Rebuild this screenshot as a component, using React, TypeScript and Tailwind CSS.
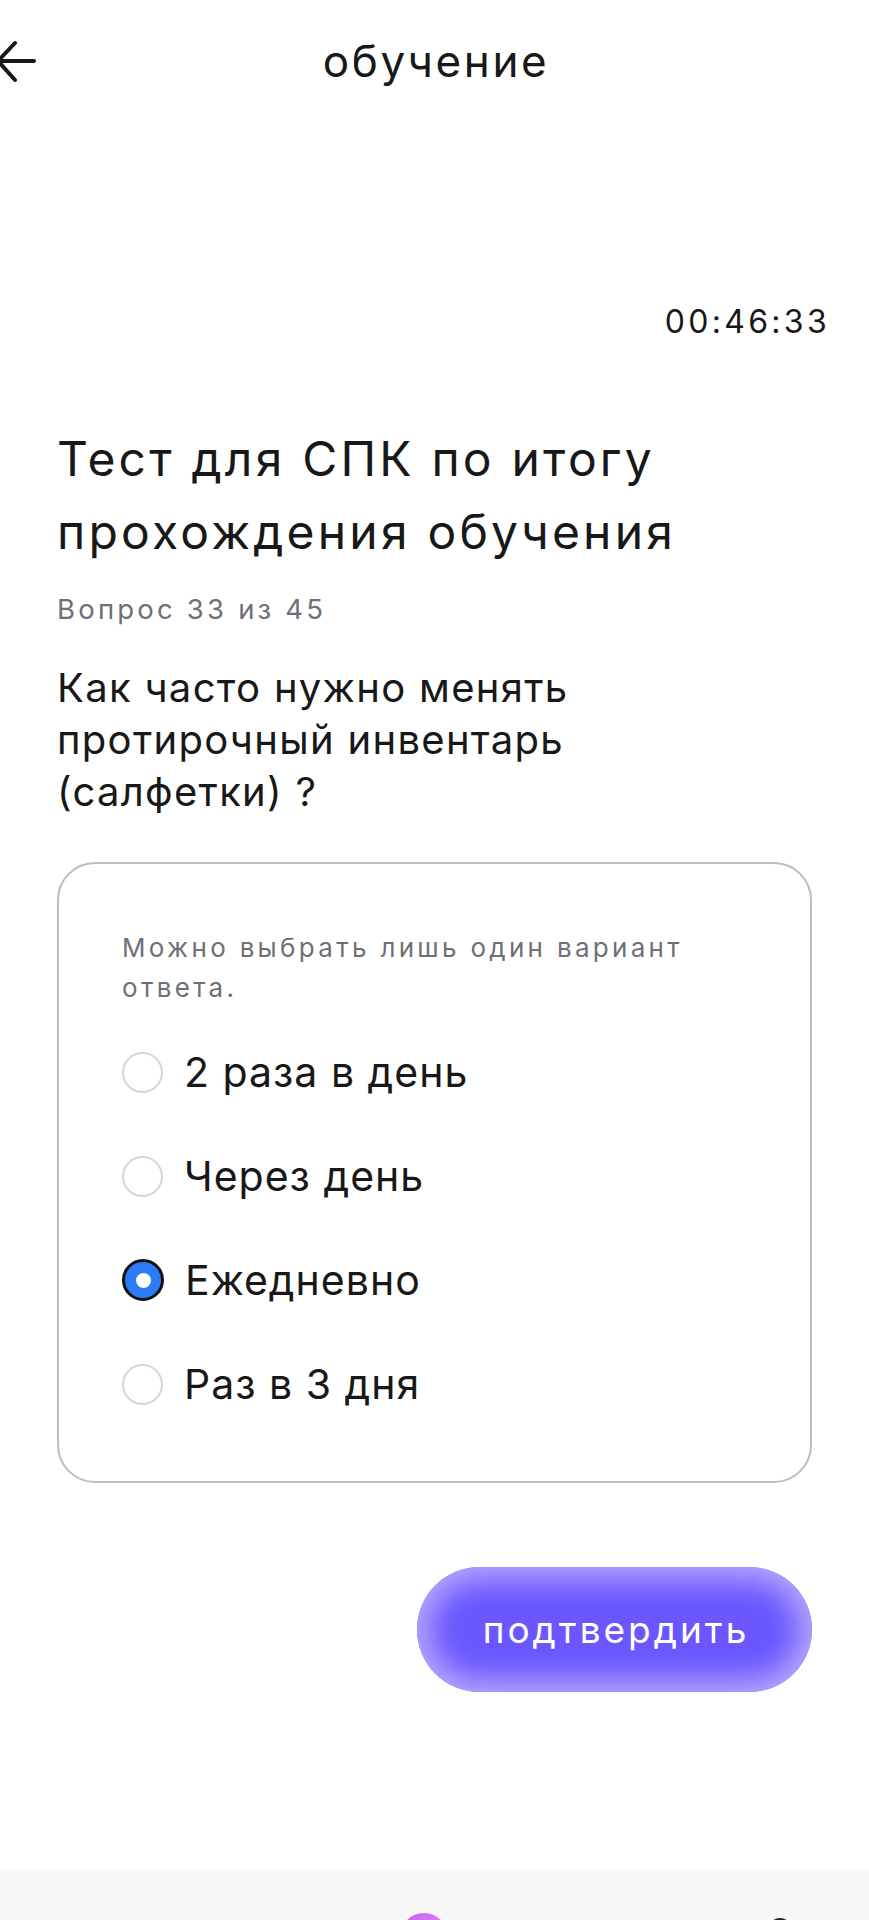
import { useState } from 'react';

const options = ['2 раза в день', 'Через день', 'Ежедневно', 'Раз в 3 дня'];

function Radio({ checked }: { checked: boolean }) {
  if (checked) {
    return (
      <span className="flex h-[42px] w-[42px] shrink-0 items-center justify-center rounded-full border-[3px] border-[#111] bg-[#2b7bf6]">
        <span className="h-[15px] w-[15px] rounded-full bg-white" />
      </span>
    );
  }
  return <span className="h-[41px] w-[41px] shrink-0 rounded-full border-2 border-[#d6d6d6] bg-white" />;
}

export default function App() {
  const [selected, setSelected] = useState(2);

  return (
    <div className="min-h-[1920px] bg-white font-['Inter','Noto_Sans',sans-serif] text-[#181818]">
      <header className="relative flex h-[122px] items-center justify-center">
        <svg className="absolute left-0 top-[39px]" width="40" height="44" viewBox="0 0 40 44" fill="none">
          <path d="M-2 22H34M15 4L-2 22L15 41" stroke="#181818" strokeWidth="4" strokeLinecap="round" strokeLinejoin="round" />
        </svg>
        <h1 className="pl-[3px] text-[44px] leading-[50px] tracking-[2.6px]">обучение</h1>
      </header>

      <div className="mt-[180px] pr-[39px] text-right text-[32px] leading-[40px] tracking-[3.3px]">00:46:33</div>

      <main className="px-[57px]">
        <h2 className="mt-[80px] text-[48px] leading-[73px] tracking-[3.2px]">
          Тест для СПК по итогу
          <br />
          прохождения обучения
        </h2>
        <p className="mt-[23px] text-[27.5px] leading-[36px] tracking-[3.2px] text-[#6d7077]">Вопрос 33 из 45</p>
        <p className="mt-[35px] text-[40px] leading-[52px] tracking-[1.3px]">
          Как часто нужно менять
          <br />
          протирочный инвентарь
          <br />
          (салфетки) ?
        </p>

        <section className="mt-[44px] h-[621px] rounded-[38px] border-2 border-[#babdc3] px-[63px] pt-[64px]">
          <p className="text-[26px] leading-[40px] tracking-[3.3px] text-[#6d7077]">
            Можно выбрать лишь один вариант
            <br />
            ответа.
          </p>
          <div className="mt-[12px] flex flex-col">
            {options.map((o, i) => (
              <button
                key={o}
                className="flex h-[104px] items-center gap-[21px] text-left"
                onClick={() => setSelected(i)}
              >
                <Radio checked={selected === i} />
                <span className="text-[41px] leading-[48px] tracking-[1px]">{o}</span>
              </button>
            ))}
          </div>
        </section>

        <div className="mt-[84px] flex justify-end">
          <button className="flex h-[125px] w-[395px] items-center justify-center rounded-full bg-[#6a57ff] pl-[3px] text-[37px] tracking-[3px] text-white shadow-[inset_0_0_30px_12px_rgba(190,180,255,0.9)]">
            подтвердить
          </button>
        </div>
      </main>

      <nav className="relative mt-[178px] h-[50px] overflow-hidden bg-[#f7f7f8]">
        <span className="absolute left-[400px] top-[43px] h-[48px] w-[48px] rounded-full bg-gradient-to-br from-[#c159f2] to-[#e9a0ff]" />
        <span className="absolute left-[768px] top-[48px] h-[24px] w-[24px] rounded-full border-[3px] border-[#222]" />
      </nav>
    </div>
  );
}
